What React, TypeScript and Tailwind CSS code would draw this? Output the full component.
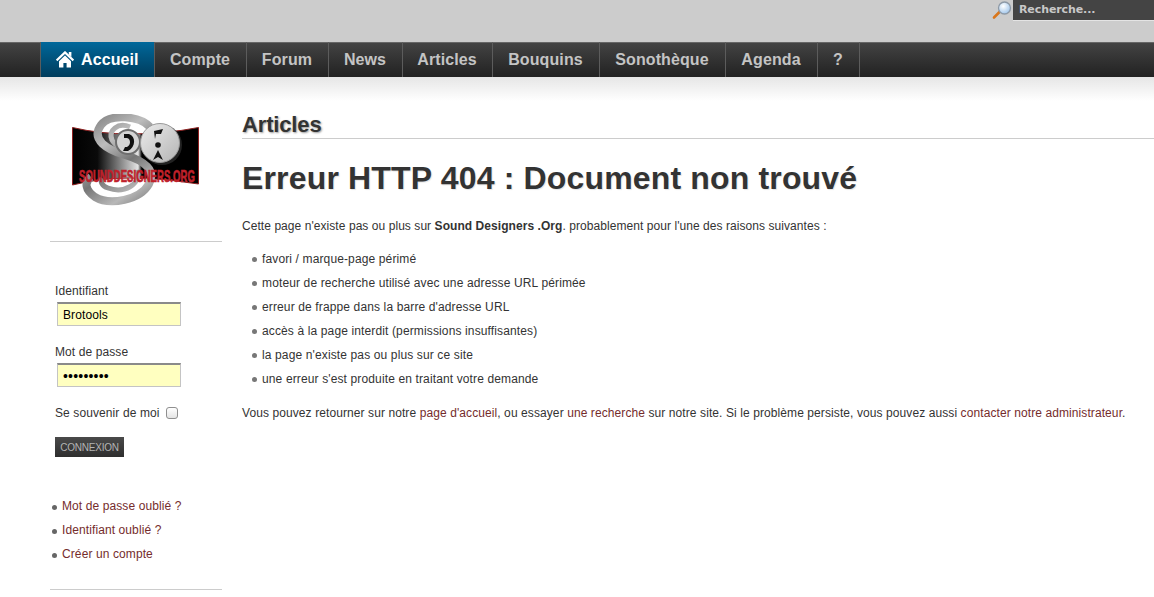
const menu = [
  { label: 'Compte', w: 'w-[92px]' },
  { label: 'Forum', w: 'w-[82px]' },
  { label: 'News', w: 'w-[74px]' },
  { label: 'Articles', w: 'w-[90px]' },
  { label: 'Bouquins', w: 'w-[107px]' },
  { label: 'Sonothèque', w: 'w-[126px]' },
  { label: 'Agenda', w: 'w-[92px]' },
  { label: '?', w: 'w-[42px]' },
];

const raisons = [
  'favori / marque-page périmé',
  'moteur de recherche utilisé avec une adresse URL périmée',
  "erreur de frappe dans la barre d'adresse URL",
  'accès à la page interdit (permissions insuffisantes)',
  "la page n'existe pas ou plus sur ce site",
  "une erreur s'est produite en traitant votre demande",
];

function Loupe() {
  return (
    <svg width="20" height="19" viewBox="0 0 20 19" className="shrink-0">
      <defs>
        <radialGradient id="verre" cx="0.4" cy="0.35" r="0.7">
          <stop offset="0" stopColor="#ffffff" />
          <stop offset="1" stopColor="#9cc3ea" />
        </radialGradient>
      </defs>
      <line x1="2" y1="16.5" x2="7.5" y2="11" stroke="#d9761c" strokeWidth="2.6" strokeLinecap="round" />
      <circle cx="12.5" cy="7" r="6" fill="url(#verre)" stroke="#8d99a6" strokeWidth="1.3" />
    </svg>
  );
}

function Maison() {
  return (
    <svg width="18" height="17" viewBox="0 0 18 17" fill="#ffffff" className="shrink-0">
      <path d="M0.6 9.4 L9 1.4 L17.4 9.4" fill="none" stroke="#ffffff" strokeWidth="2.2" />
      <path d="M12.8 1 H15.4 V6 L12.8 3.6 Z" />
      <path d="M3 10.2 L9 4.6 L15 10.2 V16.6 H10.6 V12 H7.4 V16.6 H3 Z" />
    </svg>
  );
}

// coordonnees du viewBox = pixels de la page
function Logo() {
  return (
    <svg width="132" height="92" viewBox="70 114 132 92" className="block">
      <defs>
        <linearGradient id="fond" gradientUnits="userSpaceOnUse" x1="72" y1="0" x2="199" y2="0">
          <stop offset="0" stopColor="#000000" />
          <stop offset="0.2" stopColor="#0a0a0a" />
          <stop offset="0.52" stopColor="#e4e4e4" />
          <stop offset="0.55" stopColor="#000000" />
          <stop offset="1" stopColor="#000000" />
        </linearGradient>
        <linearGradient id="metal" gradientUnits="userSpaceOnUse" x1="90" y1="115" x2="150" y2="205">
          <stop offset="0" stopColor="#7c7c7c" />
          <stop offset="0.3" stopColor="#bdbdbd" />
          <stop offset="0.55" stopColor="#767676" />
          <stop offset="0.8" stopColor="#b8b8b8" />
          <stop offset="1" stopColor="#777777" />
        </linearGradient>
        <linearGradient id="disque" x1="0" y1="0" x2="1" y2="1">
          <stop offset="0" stopColor="#ececec" />
          <stop offset="1" stopColor="#b4b4b4" />
        </linearGradient>
      </defs>
      <path
        d="M72.5 127.5 Q100 134 130 134 Q165 134 198.5 127.5 L198.5 184 Q165 178 130 178 Q100 178 72.5 185 Z"
        fill="url(#fond)"
        stroke="#8e2020"
        strokeWidth="1"
      />
      <path
        d="M150 127 C140 116 110 113 101 125 C90 140 108 150 125 155 C145 161 156 170 149 184 C140 200 110 206 95 197 C85 190 84 182 91 177"
        fill="none"
        stroke="url(#metal)"
        strokeWidth="8"
      />
      <path
        d="M130 127 C118 122 108 130 112 140 C116 148 128 150 134 152 M137 170 C142 184 124 194 108 188 C102 186 100 182 102 178"
        fill="none"
        stroke="url(#metal)"
        strokeWidth="5"
      />
      <circle cx="128" cy="142" r="12" fill="#d4d4d4" stroke="#6e6e6e" strokeWidth="2" />
      <path d="M124 134 H129 C136 136 136 147 128 151 H123 L125 147 H127 C131 145 131 139 127 138 H124 Z" fill="#111111" />
      <circle cx="162" cy="145" r="20" fill="#222222" />
      <circle cx="160" cy="143" r="19.5" fill="url(#disque)" stroke="#9a9a9a" strokeWidth="1" />
      <path d="M154 131 L163 129 L161 134 L156 134 L155 139 Z" fill="#111111" />
      <circle cx="158" cy="145" r="2.8" fill="#111111" />
      <path d="M153 160 L158 150 L163 160 L158 157 Z" fill="#111111" />
      <text
        transform="translate(79 182) scale(0.596 1)"
        fontFamily="'Liberation Sans', sans-serif"
        fontWeight="700"
        fontSize="16"
        fill="#c0202a"
        stroke="#c0202a"
        strokeWidth="0.7"
      >
        SOUNDDESIGNERS.ORG
      </text>
    </svg>
  );
}

function ChampLogin({ label, children }: { label: string; children: React.ReactNode }) {
  return (
    <div className="flex flex-col">
      <label className="pl-[5px] leading-[16px]">{label}</label>
      {children}
    </div>
  );
}

const champ =
  'mt-[3px] ml-[7px] h-[24px] w-[124px] border border-[#c4c4c4] border-t-2 border-t-[#8a8a8a] bg-[#ffffc0] pl-[5px] text-black outline-none';

export default function App() {
  return (
    <div className="h-[597px] w-[1154px] overflow-hidden bg-white font-['Liberation_Sans',Arial,sans-serif] text-[12px] tracking-[0.1px] text-[#333333]">
      <header className="flex h-[42px] items-start justify-end bg-[#cccccc]">
        <div className="flex items-center gap-[1px]">
          <Loupe />
          <div className="flex h-[20px] w-[141px] items-center bg-[#444444] pt-[1px] pl-[6px] font-['DejaVu_Sans',sans-serif] text-[11px] font-bold tracking-[-0.1px] text-[#c8c8c8] shadow-[0_1px_0_#e4e4e4]">
            Recherche...
          </div>
        </div>
      </header>

      <nav className="flex h-[35px] bg-gradient-to-b from-[#444444] to-[#222222] pl-[40px] shadow-[inset_0_1px_0_#666666]">
        <a className="flex w-[115px] items-center gap-[7px] border-x border-[#5c5c5c] bg-gradient-to-b from-[#00689b] to-[#003c5c] pl-[15px] text-[16px] font-bold text-white">
          <Maison />
          Accueil
        </a>
        {menu.map((item) => (
          <a
            key={item.label}
            className={`flex items-center justify-center border-r border-[#5c5c5c] pr-[1px] text-[16px] font-bold text-[#c4c4c4] ${item.w}`}
          >
            {item.label}
          </a>
        ))}
      </nav>
      <div className="h-[24px] bg-gradient-to-b from-[#e6e6e6] to-white" />

      <div className="flex items-start gap-[20px] pl-[50px]">
        <aside className="w-[172px] shrink-0">
          <div className="h-[141px] border-b border-[#cccccc] pt-[13px] pl-[20px]">
            <Logo />
          </div>

          <form className="flex flex-col pt-[41px]">
            <ChampLogin label="Identifiant">
              <input type="text" defaultValue="Brotools" className={`${champ} text-[12px]`} />
            </ChampLogin>
            <div className="h-[18px]" />
            <ChampLogin label="Mot de passe">
              <input type="password" defaultValue="Brotools1" className={`${champ} text-[14px] tracking-[0.2px]`} />
            </ChampLogin>
            <label className="mt-[18px] flex items-center gap-[6px] pl-[5px] leading-[16px]">
              Se souvenir de moi
              <span className="h-[12px] w-[12px] rounded-[3px] border border-[#8f8f8f] bg-gradient-to-b from-white to-[#e4e4e4]" />
            </label>
            <button
              type="button"
              className="mt-[16px] ml-[5px] h-[20px] w-[69px] bg-gradient-to-b from-[#4a4a4a] to-[#2e2e2e] text-[10px] tracking-[-0.25px] text-[#b4b4b4]"
            >
              CONNEXION
            </button>
          </form>

          <ul className="flex flex-col gap-[8px] pt-[41px] pb-[27px] text-[#752c2c]">
            {['Mot de passe oublié ?', 'Identifiant oublié ?', 'Créer un compte'].map((t) => (
              <li key={t} className="flex items-center gap-[5px] pl-[2px] leading-[16px]">
                <span className="mt-[2px] h-[5px] w-[5px] rounded-full bg-[#666666]" />
                {t}
              </li>
            ))}
          </ul>
          <div className="border-b border-[#cccccc]" />
        </aside>

        <main className="min-w-0 flex-1 pt-[10px]">
          <h2 className="border-b border-[#cccccc] text-[22px] leading-[27px] font-bold tracking-[-0.15px] text-[#333333] [text-shadow:1px_1px_2px_#999999]">
            Articles
          </h2>
          <h1 className="mt-[21px] text-[32px] leading-[37px] font-bold tracking-[0.16px] text-[#333333] [text-shadow:1px_1px_1px_#e4e4e4]">
            Erreur HTTP 404 : Document non trouvé
          </h1>
          <p className="mt-[21px] leading-[16px] tracking-[0.06px]">
            Cette page n'existe pas ou plus sur <b>Sound Designers .Org</b>. probablement pour l'une des raisons suivantes :
          </p>
          <ul className="mt-[17px] flex flex-col gap-[8px] tracking-[0.13px]">
            {raisons.map((r) => (
              <li key={r} className="flex items-center gap-[5px] pl-[10px] leading-[16px]">
                <span className="h-[5px] w-[5px] rounded-full bg-[#777777]" />
                {r}
              </li>
            ))}
          </ul>
          <p className="mt-[18px] leading-[16px] tracking-[0.09px]">
            Vous pouvez retourner sur notre <a className="text-[#752c2c]">page d'accueil</a>, ou essayer{' '}
            <a className="text-[#752c2c]">une recherche</a> sur notre site. Si le problème persiste, vous pouvez aussi{' '}
            <a className="text-[#752c2c]">contacter notre administrateur</a>.
          </p>
        </main>
      </div>
    </div>
  );
}
